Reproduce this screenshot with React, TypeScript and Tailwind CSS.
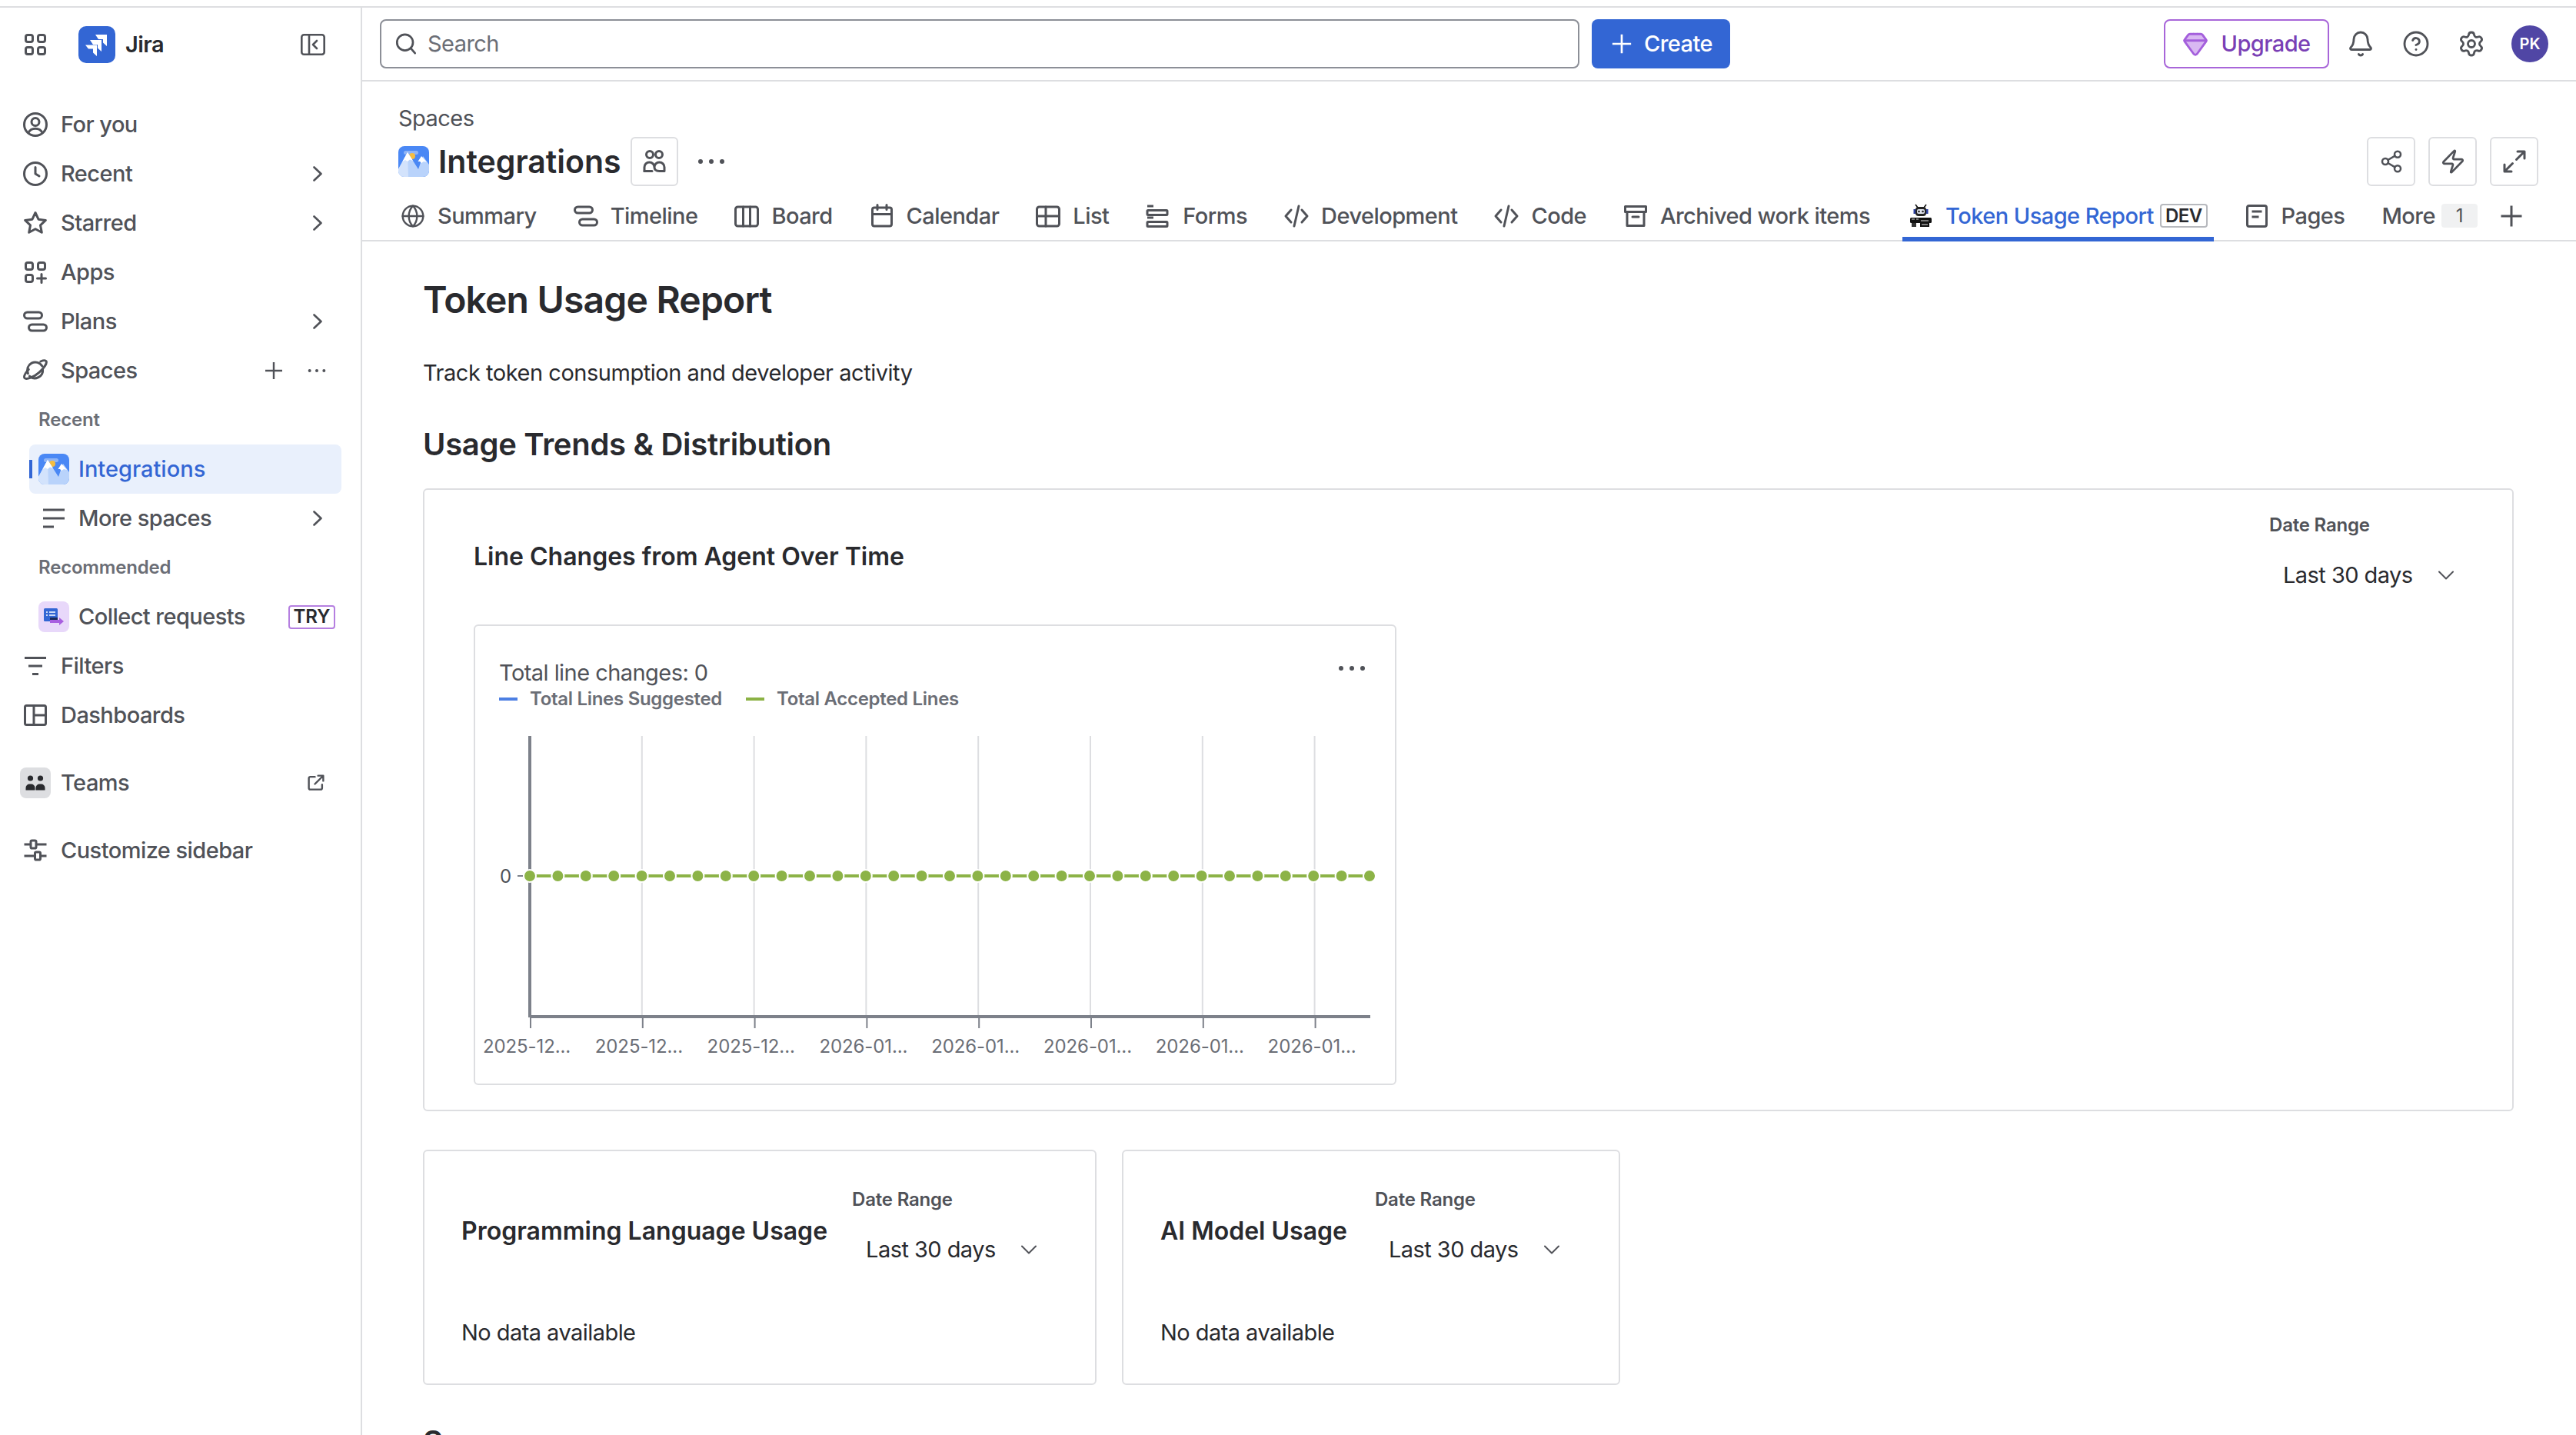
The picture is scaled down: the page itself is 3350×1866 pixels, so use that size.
import type { ReactNode } from "react";
import { Bell, CircleHelp, Gem, Globe, Settings, Share2, Zap } from "lucide-react";

// body copy sits tighter than stock Inter
const bodyText = "text-[29px] leading-[36px] tracking-[-0.55px]";
const labelText = "text-[24px] leading-[32px] tracking-[-0.2px] font-semibold";

function I16({ children, className = "" }: { children: ReactNode; className?: string }) {
  return (
    <svg
      viewBox="0 0 16 16"
      fill="none"
      stroke="currentColor"
      strokeWidth="1.5"
      strokeLinecap="round"
      strokeLinejoin="round"
      className={`h-[32px] w-[32px] shrink-0 ${className}`}
    >
      {children}
    </svg>
  );
}

const icons: Record<string, ReactNode> = {
  grid: (
    <>
      <rect x="1.75" y="1.75" width="4.5" height="4.5" rx="1.25" />
      <rect x="9.75" y="1.75" width="4.5" height="4.5" rx="1.25" />
      <rect x="1.75" y="9.75" width="4.5" height="4.5" rx="1.25" />
      <rect x="9.75" y="9.75" width="4.5" height="4.5" rx="1.25" />
    </>
  ),
  foryou: (
    <>
      <circle cx="8" cy="8" r="7.25" />
      <circle cx="8" cy="6.25" r="2.5" />
      <path d="M3.5 13.2C4.5 11.2 6 10.6 8 10.6s3.5.6 4.5 2.6" />
    </>
  ),
  clock: (
    <>
      <circle cx="8" cy="8" r="7.25" />
      <path d="M8 3.75V8l2.5 1.5" />
    </>
  ),
  star: <path d="M8 1.25l2 4.35 4.7.6-3.45 3.25.9 4.7L8 11.85l-4.15 2.3.9-4.7L1.3 6.2l4.7-.6z" />,
  apps: (
    <>
      <rect x="1.75" y="1.75" width="4.5" height="4.5" rx="1.25" />
      <rect x="9.75" y="1.75" width="4.5" height="4.5" rx="1.25" />
      <rect x="1.75" y="9.75" width="4.5" height="4.5" rx="1.25" />
      <path d="M12 9.25v5.5M9.25 12h5.5" />
    </>
  ),
  plans: (
    <>
      <rect x="0.75" y="2" width="11.5" height="4" rx="2" />
      <rect x="3.75" y="10" width="11.5" height="4" rx="2" />
    </>
  ),
  planet: (
    <>
      <path d="M3.2 9.8A5.2 5.2 0 0 1 12.4 5" />
      <path d="M4.2 11.6a5.2 5.2 0 0 0 8.6-4.4" />
      <path d="M3.6 7.2C1.4 9.6.3 11.8 1 12.8c1 1.2 5.6-.2 9.4-3.6 3.4-3 5.4-6.2 4.6-7.4-.5-.7-2-.5-3.6.2" />
    </>
  ),
  more: <path d="M1 2.5h14M1 8h14M1 13.5h7" strokeLinecap="butt" />,
  filter: <path d="M1 2.75h14M3.5 8h9M6 13.25h4" strokeLinecap="butt" />,
  dashboard: (
    <>
      <rect x="1.25" y="1.75" width="13.5" height="12.5" rx="1" />
      <path d="M7 1.75v12.5M7 8h7.75" />
    </>
  ),
  customize: (
    <>
      <path d="M0.75 4h4M9 4h6.25M0.75 11.5h6.5M11.5 11.5h3.75" strokeLinecap="butt" />
      <rect x="5" y="1.5" width="3.5" height="5" rx="0.8" />
      <rect x="7.75" y="9" width="3.5" height="5" rx="0.8" />
    </>
  ),
  external: (
    <>
      <path d="M7 2.75H3A1.25 1.25 0 0 0 1.75 4v8.5A1.25 1.25 0 0 0 3 13.75h9A1.25 1.25 0 0 0 13.25 12.5V9.5" />
      <path d="M7 9l7-7M9.75 1.75h4.5v4.5" />
    </>
  ),
  search: (
    <>
      <circle cx="7.25" cy="7" r="5.75" />
      <path d="M11.5 11.25l3 3.5" />
    </>
  ),
  people: (
    <>
      <circle cx="5" cy="3.5" r="2.25" />
      <circle cx="11" cy="3.5" r="2.25" />
      <path d="M1.5 14.25v-2.5a3.25 3.25 0 0 1 6.5 0c0 1.5 1 2.5 3.25 2.5h3.25v-2.5a3.25 3.25 0 0 0-6.5 0" />
      <path d="M1.5 14.25h5" />
    </>
  ),
  timeline: (
    <>
      <rect x="0.75" y="2" width="11.5" height="4" rx="2" />
      <rect x="3.75" y="10" width="11.5" height="4" rx="2" />
    </>
  ),
  board: (
    <>
      <rect x="0.75" y="2" width="14.5" height="12.5" rx="1.5" />
      <path d="M5.75 2v12.5M10.25 2v12.5" />
    </>
  ),
  calendar: (
    <>
      <rect x="1.75" y="2.5" width="12.5" height="12" rx="1.25" />
      <path d="M1.75 6.75h12.5M5 .75v3M11 .75v3" />
    </>
  ),
  list: (
    <>
      <rect x="0.75" y="2" width="14.5" height="12.5" rx="1.5" />
      <path d="M0.75 8h14.5M6.5 2v12.5" />
    </>
  ),
  forms: (
    <>
      <path d="M1 1.5h4M1 9h4" strokeLinecap="butt" />
      <rect x="1" y="4.25" width="13" height="3" rx="0.5" />
      <rect x="1" y="11.75" width="13" height="3" rx="0.5" />
    </>
  ),
  code: <path d="M4.5 4L1 8l3.5 4M11.5 4L15 8l-3.5 4M9.5 1.5L6.5 14.5" />,
  archive: (
    <>
      <path d="M1.25 1.75h13.5v3.5H1.25zM2.5 5.25v9h11v-9" />
      <path d="M6 8.5h4" />
    </>
  ),
  pages: (
    <>
      <rect x="1.75" y="1.25" width="12.5" height="13.5" rx="1.25" />
      <path d="M4.75 5h6.5M4.75 8.5h4.5" strokeLinecap="butt" />
    </>
  ),
  plus: <path d="M8 1.25v13.5M1.25 8h13.5" strokeLinecap="butt" />,
  expand: (
    <>
      <path d="M9.25 6.75l5-5M10 1.5h4.5V6" />
      <path d="M6.75 9.25l-5 5M6 14.5H1.5V10" />
    </>
  ),
};

function Chevron() {
  return (
    <svg viewBox="0 0 12 20" fill="none" stroke="currentColor" strokeWidth="2.6" strokeLinecap="round" strokeLinejoin="round" className="h-[20px] w-[12px]">
      <path d="M1.5 1.5L10.5 10L1.5 18.5" />
    </svg>
  );
}

function DownChevron() {
  return (
    <svg viewBox="0 0 20 12" fill="none" stroke="#505258" strokeWidth="2" strokeLinecap="round" strokeLinejoin="round" className="h-[12px] w-[20px] shrink-0">
      <path d="M1 1.5L10 10.5L19 1.5" />
    </svg>
  );
}

function Dots({ className = "" }: { className?: string }) {
  return (
    <svg viewBox="0 0 36 8" fill="currentColor" className={`shrink-0 ${className}`}>
      <circle cx="4" cy="4" r="3" />
      <circle cx="18" cy="4" r="3" />
      <circle cx="32" cy="4" r="3" />
    </svg>
  );
}

function ProjectIcon() {
  return (
    <svg viewBox="0 0 40 40" className="h-[40px] w-[40px] shrink-0">
      <defs>
        <clipPath id="project-clip">
          <rect width="40" height="40" rx="8" />
        </clipPath>
      </defs>
      <g clipPath="url(#project-clip)">
        <rect width="40" height="40" fill="#4a88f5" />
        <rect x="7" y="6" width="19" height="5" rx="2.5" fill="#8fb4f5" />
        <circle cx="18" cy="13" r="4" fill="#f5bd41" />
        <path d="M0 30L12 8L26 30L32 13L40 24V40H0Z" fill="#b9d3fb" />
        <path d="M0 30L12 8L13 40H0Z" fill="#d3e3fc" />
        <path d="M5.5 20L12 8L19 19L15 17.5L12 20L9 18Z" fill="#ffffff" />
        <path d="M25.5 20L30 13L37 21L33 20L30 22L28 20Z" fill="#ffffff" />
      </g>
    </svg>
  );
}

const primaryNav = [
  { label: "For you", icon: "foryou" },
  { label: "Recent", icon: "clock", chevron: true },
  { label: "Starred", icon: "star", chevron: true },
  { label: "Apps", icon: "apps" },
  { label: "Plans", icon: "plans", chevron: true },
];

function NavRow({ icon, label, children }: { icon: ReactNode; label: string; children?: ReactNode }) {
  return (
    <div className="flex h-[64px] items-center pl-[30px] pr-[50px] text-[#505258]">
      {icon}
      <span className={`ml-[17px] font-medium ${bodyText}`}>{label}</span>
      <span className="ml-auto flex items-center">{children}</span>
    </div>
  );
}

function SidebarHeading({ label }: { label: string }) {
  return <div className={`flex h-[64px] items-center pl-[50px] text-[#6b6e76] ${labelText}`}>{label}</div>;
}

function Sidebar() {
  return (
    <aside className="flex w-[471px] shrink-0 flex-col border-r-2 border-[#dddee1]">
      <div className="flex h-[120px] pt-[24px] pl-[30px] pr-[46px] text-[#505258]">
        <div className="flex h-[48px] w-full items-center">
          <I16>{icons.grid}</I16>
          <svg viewBox="0 0 48 48" className="ml-[40px] h-[48px] w-[48px]">
            <rect width="48" height="48" rx="10" fill="#3366d4" />
            <path d="M22 11h15v15l-5-4.5V17h-6z" fill="#fff" />
            <path d="M15 18h15v15l-5-4.5V24h-6z" fill="#fff" />
            <path d="M9 24.5h15V39l-5-4.5v-5h-6z" fill="#fff" />
          </svg>
          <span className={`ml-[13px] font-semibold text-[#292a2e] ${bodyText}`}>Jira</span>
          <svg viewBox="0 0 32 28" fill="none" stroke="currentColor" strokeWidth="2.6" strokeLinecap="round" strokeLinejoin="round" className="ml-auto h-[28px] w-[32px]">
            <rect x="1.3" y="1.3" width="29.4" height="25.4" rx="3" />
            <path d="M11 1.5v25M21 9l-5 5 5 5" />
          </svg>
        </div>
      </div>

      {primaryNav.map((item) => (
        <NavRow key={item.label} label={item.label} icon={<I16>{icons[item.icon]}</I16>}>
          {item.chevron ? <Chevron /> : null}
        </NavRow>
      ))}

      <NavRow label="Spaces" icon={<I16>{icons.planet}</I16>}>
        <svg viewBox="0 0 24 24" stroke="currentColor" strokeWidth="2.4" className="mr-[32px] h-[24px] w-[24px]">
          <path d="M12 1v22M1 12h22" />
        </svg>
        <Dots className="-mr-[5px] h-[6px] w-[24px]" />
      </NavRow>

      <SidebarHeading label="Recent" />

      <div className="ml-[38px] flex h-[64px] w-[406px] items-center rounded-[8px] bg-[#e9f0fc] text-[#3366d4]">
        <span className="h-[24px] w-[4px] bg-[#3366d4]" />
        <span className="ml-[8px]">
          <ProjectIcon />
        </span>
        <span className="ml-[12px] text-[29px] leading-[36px] font-medium">Integrations</span>
      </div>

      <div className="flex h-[64px] items-center pl-[54px] pr-[50px] text-[#505258]">
        <I16>{icons.more}</I16>
        <span className={`ml-[16px] font-medium ${bodyText}`}>More spaces</span>
        <span className="ml-auto">
          <Chevron />
        </span>
      </div>

      <SidebarHeading label="Recommended" />

      <div className="flex h-[64px] items-center pl-[50px] text-[#505258]">
        <span className="flex h-[40px] w-[40px] items-center justify-center rounded-[8px] bg-[#e8d8fa]">
          <svg viewBox="0 0 28 24" className="h-[24px] w-[28px]">
            <rect x="1" y="1" width="18" height="17" rx="1.5" fill="#3366d4" />
            <path d="M4 6h2M8 6h8M4 10h2M8 10h8" stroke="#fff" strokeWidth="1.5" />
            <rect x="9" y="13" width="10" height="5" fill="#1c2b5a" />
            <path d="M9 16h12v-3l6 5-6 5v-3H9z" fill="#a85ee0" />
          </svg>
        </span>
        <span className={`ml-[12px] font-medium ${bodyText}`}>Collect requests</span>
        <span className="mr-[33px] ml-auto flex h-[31px] w-[61px] items-center justify-center rounded-[4px] border-2 border-[#b57fe0] text-[24px] font-semibold text-[#292a2e]">
          TRY
        </span>
      </div>

      <NavRow label="Filters" icon={<I16>{icons.filter}</I16>} />
      <NavRow label="Dashboards" icon={<I16>{icons.dashboard}</I16>} />

      <div className="mt-[24px] flex h-[64px] items-center pl-[26px] pr-[46px] text-[#505258]">
        <span className="flex h-[40px] w-[40px] items-center justify-center rounded-[8px] bg-[#dddee1]">
          <svg viewBox="0 0 26 20" fill="#292a2e" className="h-[20px] w-[26px]">
            <circle cx="6.5" cy="4" r="3.6" />
            <circle cx="19.5" cy="4" r="3.6" />
            <path d="M0.5 19.5v-3A5 5 0 0 1 5.5 11.5h2a5 5 0 0 1 5 5v3zM13.5 19.5v-3a5 5 0 0 1 5-5h2a5 5 0 0 1 5 5v3z" />
          </svg>
        </span>
        <span className={`ml-[13px] font-medium ${bodyText}`}>Teams</span>
        <span className="ml-auto">
          <svg viewBox="0 0 16 16" fill="none" stroke="currentColor" strokeWidth="1.6" strokeLinecap="round" strokeLinejoin="round" className="h-[24px] w-[24px]">
            {icons.external}
          </svg>
        </span>
      </div>

      <div className="mt-[24px]">
        <NavRow label="Customize sidebar" icon={<I16>{icons.customize}</I16>} />
      </div>
    </aside>
  );
}

function TopBar() {
  return (
    <header className="flex h-[96px] shrink-0 items-center border-b-2 border-[#dddee1] pl-[23px] pr-[36px]">
      <div className="flex h-[64px] w-[1560px] items-center rounded-[8px] border-2 border-[#8c8f97] pl-[16px] text-[#505258]">
        <I16 className="scale-90">{icons.search}</I16>
        <span className={`ml-[12px] text-[#6b6e76] ${bodyText}`}>Search</span>
      </div>
      <button className={`ml-[16px] flex h-[64px] w-[180px] items-center justify-center gap-[13px] rounded-[8px] bg-[#3366d4] font-medium text-white ${bodyText}`}>
        <I16 className="scale-90">{icons.plus}</I16>
        Create
      </button>
      <button className={`ml-auto flex h-[64px] w-[215px] items-center justify-center gap-[16px] rounded-[8px] border-2 border-[#a866d9] font-medium text-[#7a3fb5] ${bodyText}`}>
        <Gem className="h-[34px] w-[34px] fill-[#d9b8f2] text-[#a45fdc]" />
        Upgrade
      </button>
      <div className="ml-[5px] flex items-center text-[#505258]">
        <span className="flex w-[72px] justify-center">
          <Bell className="h-[36px] w-[36px]" strokeWidth={1.9} />
        </span>
        <span className="flex w-[72px] justify-center">
          <CircleHelp className="h-[36px] w-[36px]" strokeWidth={1.9} />
        </span>
        <span className="flex w-[72px] justify-center">
          <Settings className="h-[36px] w-[36px]" strokeWidth={1.9} />
        </span>
      </div>
      <span className="ml-[16px] flex h-[48px] w-[48px] items-center justify-center rounded-full bg-[#5046a5] text-[20px] font-semibold text-white">
        PK
      </span>
    </header>
  );
}

const tabs = [
  { label: "Summary", icon: "globe" },
  { label: "Timeline", icon: "timeline" },
  { label: "Board", icon: "board" },
  { label: "Calendar", icon: "calendar" },
  { label: "List", icon: "list" },
  { label: "Forms", icon: "forms" },
  { label: "Development", icon: "code" },
  { label: "Code", icon: "code" },
  { label: "Archived work items", icon: "archive" },
];

function RobotIcon() {
  return (
    <svg viewBox="0 0 30 32" className="h-[32px] w-[32px] shrink-0">
      <path d="M8 1l3 4h8l3-4" stroke="#111" strokeWidth="1.6" fill="none" />
      <rect x="8" y="4" width="14" height="12" rx="4" fill="#222" />
      <rect x="10" y="7" width="10" height="6" rx="2" fill="#dfe3ec" />
      <circle cx="12.5" cy="10" r="1.3" fill="#222" />
      <circle cx="17.5" cy="10" r="1.3" fill="#222" />
      <rect x="5.5" y="7" width="2.5" height="6" fill="#2b3f9e" />
      <rect x="22" y="7" width="2.5" height="6" fill="#2b3f9e" />
      <rect x="1" y="18" width="28" height="7" rx="1.5" fill="#111" />
      <path d="M3 20h4M9 20h3M15 22h10" stroke="#ddd" strokeWidth="1.2" />
      <rect x="3" y="25" width="6" height="5" fill="#333" />
      <rect x="14" y="25" width="12" height="5" fill="#111" />
      <path d="M16 27h8" stroke="#ccc" strokeWidth="1.2" />
    </svg>
  );
}

function Tabs() {
  return (
    <nav className={`flex h-[65px] shrink-0 items-start gap-[32px] border-b-2 border-[#dddee1] pl-[42px] font-medium whitespace-nowrap text-[#505258] ${bodyText}`}>
      {tabs.map((tab) => (
        <div key={tab.label} className="flex h-[63px] items-center gap-[16px] px-[8px]">
          {tab.icon === "globe" ? <Globe className="h-[34px] w-[32px] shrink-0" strokeWidth={1.8} /> : <I16>{icons[tab.icon]}</I16>}
          <span>{tab.label}</span>
        </div>
      ))}
      <div className="ml-[2px] flex h-[65px] items-center gap-[16px] px-[8px] pb-[2px] text-[#3366d4] shadow-[inset_0_-6px_0_#3366d4]">
        <RobotIcon />
        <span className="flex items-center gap-[8px]">
          Token Usage Report
          <span className="flex h-[31px] items-center rounded-[4px] border-2 border-[#b7b9be] px-[5px] text-[24px] font-semibold text-[#292a2e]">
            DEV
          </span>
        </span>
      </div>
      <div className="flex h-[63px] items-center gap-[16px] px-[8px]">
        <I16>{icons.pages}</I16>
        <span>Pages</span>
      </div>
      <div className="flex h-[63px] items-center gap-[8px] px-[8px]">
        <span>More</span>
        <span className="flex h-[31px] w-[47px] items-center justify-center rounded-[4px] bg-[#f0f1f2] text-[24px] font-normal">1</span>
      </div>
      <span className="-ml-[12px] flex h-[63px] items-center">
        <I16>{icons.plus}</I16>
      </span>
    </nav>
  );
}

function DateRange() {
  return (
    <div className="w-[252px] shrink-0">
      <div className={`text-[#505258] ${labelText}`}>Date Range</div>
      <div className={`mt-[17px] flex h-[64px] items-center pl-[18px] text-[#292a2e] ${bodyText}`}>
        <span className="w-[202px]">Last 30 days</span>
        <DownChevron />
      </div>
    </div>
  );
}

const gridLines = [0, 1, 2, 3, 4, 5, 6, 7].map((i) => 689 + i * 145.8);
const points = Array.from({ length: 31 }, (_, i) => 689 + i * 36.4);
const dateLabels = ["2025-12...", "2025-12...", "2025-12...", "2026-01...", "2026-01...", "2026-01...", "2026-01...", "2026-01..."];

function LineChart() {
  return (
    <div className="mt-[32px] h-[599px] w-[1200px] rounded-[6px] border-2 border-[#dddee1]">
      <div className="flex items-start justify-between pt-[43px] pl-[31px] pr-[38px]">
        <div>
          <div className={`text-[#505258] ${bodyText}`}>Total line changes: 0</div>
          <div className="flex items-center text-[24px] leading-[32px] font-semibold tracking-[-0.3px] text-[#6b6e76]">
            <span className="h-[4px] w-[24px] bg-[#4c7fe3]" />
            <span className="ml-[16px]">Total Lines Suggested</span>
            <span className="ml-[31px] h-[4px] w-[24px] bg-[#8bb244]" />
            <span className="ml-[16px]">Total Accepted Lines</span>
          </div>
        </div>
        <Dots className="mt-[8px] h-[8px] w-[36px] text-[#505258]" />
      </div>
      <svg viewBox="619 926 1195 483" className="ml-[1px] block h-[483px] w-[1195px]">
        {gridLines.slice(1).map((x) => (
          <line key={x} x1={x} x2={x} y1={958} y2={1323} stroke="#dddee1" strokeWidth="2" />
        ))}
        <line x1={689} x2={689} y1={958} y2={1324} stroke="#7d818a" strokeWidth="4" />
        <line x1={689} x2={1782} y1={1323} y2={1323} stroke="#7d818a" strokeWidth="4" />
        {gridLines.map((x) => (
          <line key={x} x1={x + 1} x2={x + 1} y1={1325} y2={1338} stroke="#7d818a" strokeWidth="2" />
        ))}
        <line x1={673} x2={680} y1={1140} y2={1140} stroke="#7d818a" strokeWidth="2" />
        <line x1={689} x2={1788} y1={1140} y2={1140} stroke="#8cb347" strokeWidth="4" />
        {points.map((x) => (
          <circle key={x} cx={x} cy={1140} r="8" fill="#8cb347" stroke="#ffffff" strokeWidth="2" />
        ))}
        <text x={650} y={1149} fontSize="24" fill="#505258">0</text>
        {dateLabels.map((label, i) => (
          <text key={i} x={628 + i * 145.8} y={1370} fontSize="24" letterSpacing="-0.1" fill="#6b6e76">
            {label}
          </text>
        ))}
      </svg>
    </div>
  );
}

function SmallCard({ title, width, gap }: { title: string; width: string; gap: string }) {
  return (
    <div className={`h-[306px] rounded-[6px] border-2 border-[#dddee1] pt-[47px] pl-[48px] ${width}`}>
      <div className={`flex items-center ${gap}`}>
        <h3 className="text-[32px] leading-[44px] font-semibold whitespace-nowrap text-[#292a2e]">{title}</h3>
        <DateRange />
      </div>
      <p className={`mt-[58px] text-[#292a2e] ${bodyText}`}>No data available</p>
    </div>
  );
}

export default function App() {
  return (
    <div className="h-[1866px] w-[3350px] overflow-hidden bg-white font-['Inter',sans-serif] text-[#292a2e]">
      <div className="h-[10px] border-b-2 border-[#dddee1]" />
      <div className="flex h-[1856px]">
        <Sidebar />
        <div className="flex min-w-0 flex-1 flex-col">
          <TopBar />
          <div className="shrink-0 pt-[30px] pl-[47px] pr-[49px]">
            <div className={`text-[#505258] ${bodyText}`}>Spaces</div>
            <div className="mt-[6px] flex h-[64px] items-center">
              <ProjectIcon />
              <h1 className="ml-[12px] text-[41px] leading-[48px] font-semibold text-[#292a2e]">Integrations</h1>
              <span className="ml-[12px] flex h-[64px] w-[62px] items-center justify-center rounded-[6px] border-2 border-[#dddee1] text-[#505258]">
                <I16>{icons.people}</I16>
              </span>
              <Dots className="ml-[25px] h-[8px] w-[36px] text-[#505258]" />
              <div className="ml-auto flex gap-[17px] text-[#505258]">
                <span className="flex h-[64px] w-[63px] items-center justify-center rounded-[6px] border-2 border-[#dddee1]">
                  <Share2 className="h-[32px] w-[32px]" strokeWidth={1.9} />
                </span>
                <span className="flex h-[64px] w-[63px] items-center justify-center rounded-[6px] border-2 border-[#dddee1]">
                  <Zap className="h-[34px] w-[34px]" strokeWidth={1.9} />
                </span>
                <span className="flex h-[64px] w-[63px] items-center justify-center rounded-[6px] border-2 border-[#dddee1]">
                  <I16>{icons.expand}</I16>
                </span>
              </div>
            </div>
          </div>
          <div className="mt-[7px]">
            <Tabs />
          </div>
          <main className="pt-[48px] pl-[79px]">
            <h1 className="text-[48px] leading-[56px] font-semibold tracking-[-0.8px] text-[#292a2e]">Token Usage Report</h1>
            <p className="mt-[49px] text-[29px] leading-[36px] tracking-[-0.47px] text-[#292a2e]">Track token consumption and developer activity</p>
            <h2 className="mt-[51px] text-[40px] leading-[48px] font-semibold tracking-[-0.3px] text-[#292a2e]">Usage Trends &amp; Distribution</h2>

            <section className="mt-[33px] h-[810px] w-[2719px] rounded-[6px] border-2 border-[#dddee1] pt-[30px] pl-[64px] pr-[64px]">
              <div className="flex items-center justify-between">
                <h3 className="text-[32px] leading-[44px] font-semibold text-[#292a2e]">Line Changes from Agent Over Time</h3>
                <DateRange />
              </div>
              <LineChart />
            </section>

            <section className="mt-[50px] flex gap-[33px]">
              <SmallCard title="Programming Language Usage" width="w-[876px]" gap="gap-[32px]" />
              <SmallCard title="AI Model Usage" width="w-[648px]" gap="gap-[36px]" />
            </section>

            <h2 className="mt-[50px] text-[40px] leading-[48px] font-semibold tracking-[-0.3px] text-[#292a2e]">Summary</h2>
          </main>
        </div>
      </div>
    </div>
  );
}
